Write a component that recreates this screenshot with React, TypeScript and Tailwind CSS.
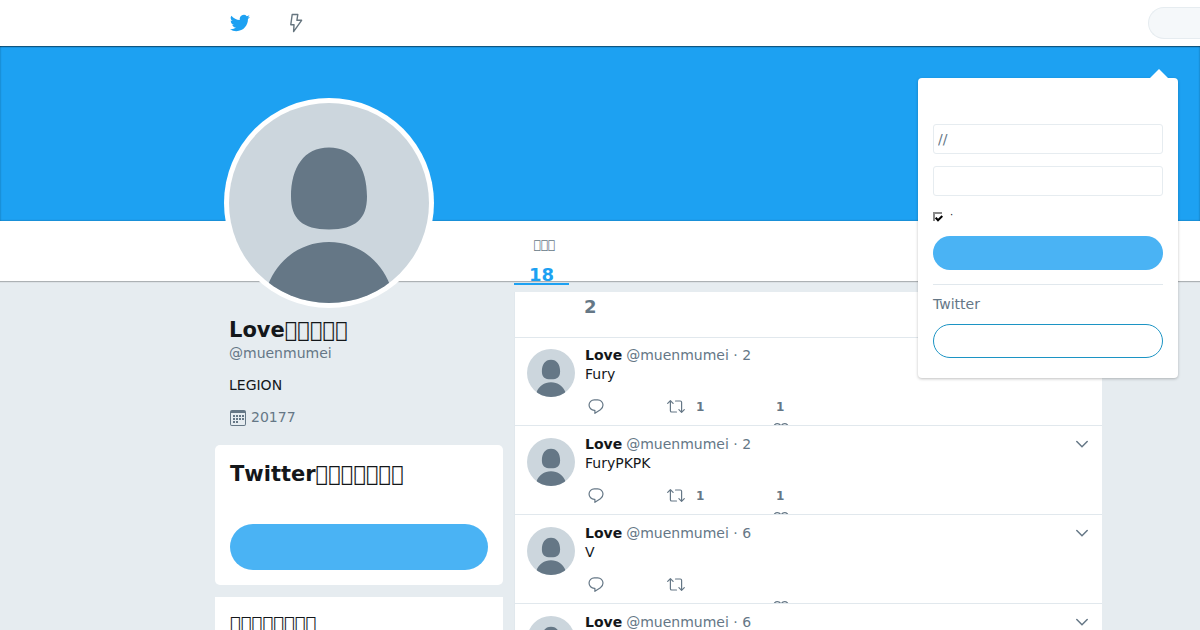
import { useState, type FormEvent } from 'react';

interface Tweet {
  id: number;
  date: string;
  text: string;
  retweets?: number;
  likes?: number;
}

const tweets: Tweet[] = [
  { id: 1, date: '2', text: 'Fury', retweets: 1, likes: 1 },
  { id: 2, date: '2', text: 'FuryPKPK', retweets: 1, likes: 1 },
  { id: 3, date: '6', text: 'V' },
  { id: 4, date: '6', text: '' },
];

// glyph that the font has no drawing for, shows as an empty box
const box = '\uE001';

function BirdIcon() {
  return (
    <svg viewBox="0 0 24 24" className="h-5 w-5 fill-[#1da1f2]" aria-hidden="true">
      <path d="M23.95 4.57a10 10 0 0 1-2.82.77 4.96 4.96 0 0 0 2.16-2.72c-.95.55-2 .95-3.13 1.18a4.92 4.92 0 0 0-8.38 4.48A13.93 13.93 0 0 1 1.64 3.16a4.92 4.92 0 0 0 1.52 6.57 4.9 4.9 0 0 1-2.23-.61v.06a4.92 4.92 0 0 0 3.95 4.83 5 5 0 0 1-2.21.08 4.94 4.94 0 0 0 4.6 3.42A9.87 9.87 0 0 1 0 19.54a13.99 13.99 0 0 0 7.55 2.21c9.05 0 14-7.5 14-13.98 0-.21 0-.42-.02-.63a9.94 9.94 0 0 0 2.46-2.55z" />
    </svg>
  );
}

function BoltIcon() {
  return (
    <svg viewBox="0 0 14 20" className="h-5 w-[14px] fill-none stroke-[#66757f]" strokeWidth="1.4" strokeLinejoin="round" aria-hidden="true">
      <path d="M3.2 1.5h5.6L7.9 7.3h4.7L4.6 18.6l.4-6.9H1.8z" />
    </svg>
  );
}

function CalendarIcon() {
  return (
    <svg viewBox="0 0 16 16" className="h-4 w-4 fill-[#657786]" aria-hidden="true">
      <path fillRule="evenodd" d="M2 0h12a2 2 0 0 1 2 2v12a2 2 0 0 1-2 2H2a2 2 0 0 1-2-2V2a2 2 0 0 1 2-2zM1 3v11c0 .6.4 1 1 1h12c.6 0 1-.4 1-1V3z" />
      <path d="M6 5h2v2H6zM9 5h2v2H9zM12 5h2v2h-2zM3 5h2v2H3zM3 8h2v2H3zM6 8h2v2H6zM9 8h2v2H9zM12 8h2v2h-2zM3 11h2v2H3zM6 11h2v2H6z" />
    </svg>
  );
}

function ReplyIcon() {
  return (
    <svg viewBox="0 0 16 16" className="h-4 w-4 fill-none stroke-[#657786]" strokeWidth="1.2" strokeLinejoin="round" aria-hidden="true">
      <path d="M6.3.8h3.400a5.300 5.300 0 0 1 5.300 5.300c0 2-1 3.600-2.600 4.600L6.900 14.300v-3h-.6a5.250 5.250 0 0 1 0-10.500z" />
    </svg>
  );
}

function RetweetIcon() {
  return (
    <svg viewBox="0 0 18 16" className="h-4 w-[18px] fill-none stroke-[#657786]" strokeWidth="1.2" strokeLinecap="round" strokeLinejoin="round" aria-hidden="true">
      <path d="M.7 4.400 3.400 1.700 6.100 4.400M3.400 2v9.700c0 .8.500 1.300 1.300 1.300h4.800M17.300 10.600l-2.700 2.700-2.700-2.700M14.600 13V3.300c0-.8-.5-1.300-1.300-1.300H8.500" />
    </svg>
  );
}

function HeartIcon() {
  return (
    <svg viewBox="0 0 16 14" className="h-[14px] w-4 fill-none stroke-[#657786]" strokeWidth="1.3" aria-hidden="true">
      <path d="M8 13.400C3.500 10.500.8 7.700.8 4.400.8 2.300 2.400.7 4.300.7 5.900.7 7.300 1.700 8 3.200 8.700 1.700 10.100.7 11.700.7c1.900 0 3.500 1.600 3.500 3.700 0 3.300-2.700 6.100-7.200 9z" />
    </svg>
  );
}

function ChevronIcon() {
  return (
    <svg viewBox="0 0 12 8" className="h-2 w-3 fill-none stroke-[#657786]" strokeWidth="1.5" strokeLinecap="round" aria-hidden="true">
      <path d="m.8 1.500 5.200 5.200 5.200-5.200" />
    </svg>
  );
}

function Avatar({ className }: { className: string }) {
  return (
    <svg viewBox="0 0 200 200" className={`block rounded-full bg-[#ccd6dd] ${className}`} role="img" aria-label="Love">
      <path fill="#657786" d="M100 44.500c25 0 38 20 38 49 0 22-11 33-38 33s-38-11-38-33c0-29 13-49 38-49zM100 139c-28 0-51 17-61 43v18h122v-18c-10-26-33-43-61-43z" />
    </svg>
  );
}

function TweetItem({ tweet }: { tweet: Tweet }) {
  return (
    <li className="flex h-[89px] gap-[10px] overflow-hidden border-b border-[#e1e8ed] px-3 pt-3">
      <Avatar className="h-12 w-12 shrink-0" />
      <div className="-mt-1 min-w-0 flex-1">
        <div className="flex h-5 items-center gap-1">
          <a href="#love" className="font-bold text-[#14171a]">Love</a>
          <span className="text-[#657786]">@muenmumei · {tweet.date}</span>
          <button type="button" aria-label="More" className="mr-[2px] ml-auto">
            <ChevronIcon />
          </button>
        </div>
        <p className="h-[30px]">{tweet.text}</p>
        <div className="flex h-6 text-xs leading-6 font-bold text-[#657786]">
          <button type="button" aria-label="Reply" className="flex w-[82px] items-center pl-[3px]">
            <ReplyIcon />
          </button>
          <button type="button" aria-label="Retweet" className="flex w-[106px] items-center gap-[11px]">
            <RetweetIcon />
            {tweet.retweets}
          </button>
          <button type="button" aria-label="Like" className="flex h-11 w-4 flex-col items-start">
            <span className="h-7 pl-[3px]">{tweet.likes}</span>
            <HeartIcon />
          </button>
        </div>
      </div>
    </li>
  );
}

function LoginPanel() {
  const [remember, setRemember] = useState(true);

  const handleSubmit = (e: FormEvent) => {
    e.preventDefault();
  };

  return (
    <div className="absolute top-[78px] right-[22px] z-20 w-[260px] rounded bg-white px-[15px] pt-[46px] pb-5 shadow-[0_1px_3px_rgba(0,0,0,0.25)]">
      <svg viewBox="0 0 18 9" className="absolute -top-[9px] right-[10px] h-[9px] w-[18px] fill-white" aria-hidden="true">
        <path d="M0 9 9 0l9 9z" />
      </svg>
      <form onSubmit={handleSubmit}>
        <input
          type="text"
          aria-label="Username"
          placeholder="//"
          className="mb-3 block h-[30px] w-full rounded-[3px] border border-[#e6ecf0] px-1 placeholder:text-[#657786]"
        />
        <input type="password" aria-label="Password" className="block h-[30px] w-full rounded-[3px] border border-[#e6ecf0] px-1" />
        <label className="relative mt-4 mb-[11px] flex h-[13px] gap-2 text-[10px] leading-[6px]">
          <input
            type="checkbox"
            checked={remember}
            onChange={(e) => setRemember(e.target.checked)}
            className="h-[9px] w-[9px] appearance-none border-t-2 border-l-2 border-[#888]"
          />
          {remember && (
            <svg viewBox="0 0 8 7" className="absolute top-[3px] left-[2px] h-[7px] w-2 fill-none stroke-black" strokeWidth="2" aria-hidden="true">
              <path d="m.7 2.700 2.300 2.500L7.300 1" />
            </svg>
          )}
          <span>·</span>
        </label>
        <button type="submit" aria-label="Log in" className="block h-[34px] w-full rounded-full bg-[#4ab3f4]" />
      </form>
      <div className="mt-[14px] border-t border-[#e1e8ed] pt-[9px]">
        <p className="mb-[10px] leading-5 text-[#657786]">Twitter</p>
        <button type="button" aria-label="Sign up" className="block h-[34px] w-full rounded-full border border-[#1c94c4]" />
      </div>
    </div>
  );
}

export default function App() {
  return (
    <div className="relative h-screen overflow-hidden bg-[#e6ecf0] font-['DejaVu_Sans',sans-serif] text-sm leading-[18px] text-[#14171a]">
      <header className="relative z-10 flex h-[46px] items-center bg-white pl-[230px] shadow-[0_1px_1px_rgba(0,0,0,0.4)]">
        <a href="#home" aria-label="Twitter" className="mr-[39px]">
          <BirdIcon />
        </a>
        <a href="#moments" aria-label="Moments">
          <BoltIcon />
        </a>
        <input
          type="search"
          aria-label="Search"
          className="ml-auto h-8 w-[52px] rounded-l-full border border-r-0 border-[#e6ecf0] bg-[#f5f8fa] px-3"
        />
      </header>

      <div className="h-[175px] bg-[#1da1f2] shadow-[inset_0_0_2px_rgba(0,0,0,0.4)]" />
      <nav className="relative flex h-[60px] bg-white pl-[514px] shadow-[0_1px_1px_rgba(0,0,0,0.25)]">
        <a href="#tweets" className="flex h-16 w-[55px] flex-col items-center border-b-2 border-[#1da1f2] pt-4">
          <span className="pl-[6px] text-xs leading-4 text-[#657786]">{box.repeat(3)}</span>
          <span className="mt-3 text-lg leading-5 font-bold text-[#1da1f2]">18</span>
        </a>
      </nav>

      <main className="mr-[98px] ml-[215px] flex gap-[11px]">
        <aside className="relative w-[288px] shrink-0">
          <div className="-mt-[183px] ml-[9px] w-[210px] rounded-full bg-white p-[5px]">
            <Avatar className="h-[200px] w-[200px]" />
          </div>
          <div className="px-[14px]">
            <h1 className="mt-[10px] text-[21px] leading-6 font-bold">Love{box.repeat(5)}</h1>
            <a href="#love" className="mt-[2px] block text-[#657786]">@muenmumei</a>
            <p className="mt-[14px]">LEGION</p>
            <p className="mt-[14px] flex gap-[5px] pl-px text-[#657786]">
              <span className="mt-[2px]">
                <CalendarIcon />
              </span>
              20177
            </p>
          </div>

          <section className="mt-[19px] rounded-[5px] bg-white px-[15px] pt-[17px] pb-[15px]">
            <h2 className="text-[21px] leading-6 font-bold [font-kerning:none]">Twitter{box.repeat(7)}</h2>
            <button type="button" aria-label="Sign up" className="mt-[38px] block h-[46px] w-full rounded-full bg-[#4ab3f4]" />
          </section>

          <section className="mt-3 bg-white px-[15px] pt-[15px] pb-6">
            <h2 className="text-lg leading-6">{box.repeat(8)}</h2>
          </section>
        </aside>

        <section className="mt-[11px] min-w-0 flex-1 border-l border-[#e1e8ed] bg-white">
          <h2 className="-mb-px h-[46px] border-b border-[#e1e8ed] pt-[5px] pl-[69px] text-lg leading-5 font-bold text-[#657786]">2</h2>
          <ol>
            {tweets.map((tweet) => (
              <TweetItem key={tweet.id} tweet={tweet} />
            ))}
          </ol>
        </section>
      </main>

      <LoginPanel />
    </div>
  );
}
